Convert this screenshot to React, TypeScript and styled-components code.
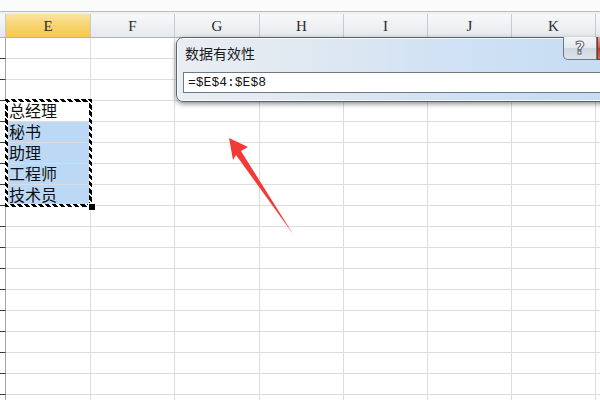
import React from "react";
import styled, { createGlobalStyle } from "styled-components";

const Global = createGlobalStyle`
  html, body { margin: 0; padding: 0; background: #fff; }
  body { font-family: "Noto Sans CJK SC", "Noto Sans", sans-serif; }
`;

const Page = styled.div`
  position: relative;
  width: 600px;
  height: 400px;
  overflow: hidden;
  background: #fff;
`;

const TopStrip = styled.div`
  height: 11px;
  background: #fbfbfb;
  border-bottom: 1px solid #b9bec4;
  box-sizing: content-box;
`;

const Gap = styled.div`
  height: 2px;
  background: #eef0f2;
`;

const HeaderRow = styled.div`
  display: flex;
  height: 23px;
  border-bottom: 1px solid #a9b3bd;
  box-sizing: content-box;
  background: linear-gradient(#f7f8f9, #e6e9ec);
`;

const Corner = styled.div`
  flex: 0 0 6px;
  border-right: 1px solid #c5cad0;
  box-sizing: border-box;
`;

const ColHeader = styled.div<{ $w: number; $active?: boolean }>`
  flex: 0 0 ${(p) => p.$w}px;
  box-sizing: border-box;
  border-right: 1px solid #c5cad0;
  display: flex;
  align-items: center;
  justify-content: center;
  font-family: "Liberation Serif", "DejaVu Serif", serif;
  font-size: 15px;
  color: #2c2c2c;
  padding-top: 2px;
  background: ${(p) =>
    p.$active ? "linear-gradient(#fbe3a0, #f7d46f 50%, #f5c94f)" : "transparent"};
`;

const Row = styled.div`
  display: flex;
  height: 21px;
`;

const RowStub = styled.div`
  flex: 0 0 6px;
  box-sizing: border-box;
  border-right: 1px solid #a0a7ae;
  border-bottom: 1px solid #3a3a3a;
  background: #fff;
`;

const Cell = styled.div<{ $w: number; $sel?: boolean }>`
  flex: 0 0 ${(p) => p.$w}px;
  box-sizing: border-box;
  border-right: 1px solid #dadcdd;
  border-bottom: 1px solid #dadcdd;
  background: ${(p) => (p.$sel ? "#bcd8f5" : "#fff")};
  font-family: "Noto Sans CJK SC", sans-serif;
  font-size: 16px;
  line-height: 19px;
  color: #111;
  padding-left: 3px;
  white-space: nowrap;
`;

const Ants = styled.div`
  position: absolute;
  left: 5px;
  top: 99px;
  width: 87px;
  height: 108px;
  box-sizing: border-box;
  border: 3px solid #000;
  border-image: repeating-linear-gradient(45deg, #000 0 3px, #fff 3px 5px) 3;
  pointer-events: none;
`;

const Handle = styled.div`
  position: absolute;
  left: 88px;
  top: 203px;
  width: 6px;
  height: 6px;
  background: #000;
  border: 1px solid #fff;
`;

const Dialog = styled.div`
  position: absolute;
  left: 176px;
  top: 37px;
  width: 470px;
  height: 65px;
  box-sizing: border-box;
  border: 1px solid #58636f;
  border-radius: 7px 0 0 7px;
  background: linear-gradient(90deg, #e9eef3 0%, #dfe8f1 30%, #cfe1f4 60%, #c4dbf2 100%);
  box-shadow: 0 2px 5px rgba(0, 0, 0, 0.45), inset 0 0 0 1px rgba(255, 255, 255, 0.75);
  display: flex;
  flex-direction: column;
  padding: 5px 0 0 6px;
`;

const TitleBar = styled.div`
  display: flex;
  align-items: flex-start;
  height: 29px;
`;

const Title = styled.div`
  font-family: "Noto Sans CJK SC", sans-serif;
  font-size: 14px;
  line-height: 20px;
  color: #1b1b1b;
  padding-left: 2px;
  flex: 1;
`;

const Buttons = styled.div`
  display: flex;
  margin-top: -6px;
  margin-right: 4px;
`;

const HelpButton = styled.div`
  width: 34px;
  height: 23px;
  box-sizing: border-box;
  border: 1px solid #6b7886;
  border-top: none;
  border-radius: 0 0 0 5px;
  background: linear-gradient(#f4f6f8, #e3e8ee 50%, #cfd7e0 51%, #dce3ea);
  display: flex;
  align-items: center;
  justify-content: center;
  font-family: "DejaVu Sans", sans-serif;
  font-weight: bold;
  font-size: 17px;
  color: #fff;
  -webkit-text-stroke: 1px #5f656c;
`;

const CloseButton = styled.div`
  width: 44px;
  height: 23px;
  box-sizing: border-box;
  border: 1px solid #7a3a30;
  border-top: none;
  background: linear-gradient(#e8a493, #d5553e 50%, #c23b22 51%, #d8694c);
`;

const Input = styled.div`
  height: 21px;
  box-sizing: border-box;
  border: 1px solid #6f7983;
  border-right: none;
  background: #fff;
  font-family: "Liberation Mono", "DejaVu Sans Mono", monospace;
  font-size: 13px;
  line-height: 19px;
  color: #111;
  padding-left: 4px;
`;

const Arrow = styled.svg`
  position: absolute;
  left: 0;
  top: 0;
  pointer-events: none;
`;

const widths = [85, 84, 85, 84, 84, 84, 84, 30];
const letters = ["E", "F", "G", "H", "I", "J", "K", ""];
const items: Record<number, string> = {
  3: "总经理",
  4: "秘书",
  5: "助理",
  6: "工程师",
  7: "技术员",
};

export default function App() {
  return (
    <Page>
      <Global />
      <TopStrip />
      <Gap />
      <HeaderRow>
        <Corner />
        {letters.map((l, i) => (
          <ColHeader key={i} $w={widths[i]} $active={i === 0}>
            {l}
          </ColHeader>
        ))}
      </HeaderRow>
      {Array.from({ length: 18 }).map((_, r) => (
        <Row key={r}>
          <RowStub />
          {widths.map((w, c) => (
            <Cell key={c} $w={w} $sel={c === 0 && r >= 4 && r <= 7}>
              {c === 0 ? items[r] ?? "" : ""}
            </Cell>
          ))}
        </Row>
      ))}
      <Ants />
      <Handle />
      <Dialog>
        <TitleBar>
          <Title>数据有效性</Title>
          <Buttons>
            <HelpButton>?</HelpButton>
            <CloseButton />
          </Buttons>
        </TitleBar>
        <Input>=$E$4:$E$8</Input>
      </Dialog>
      <Arrow width="600" height="400" viewBox="0 0 600 400">
        <polygon
          points="229,138 248,147 241,151 293,234 236,155 233,160"
          fill="#f23a36"
        />
      </Arrow>
    </Page>
  );
}
